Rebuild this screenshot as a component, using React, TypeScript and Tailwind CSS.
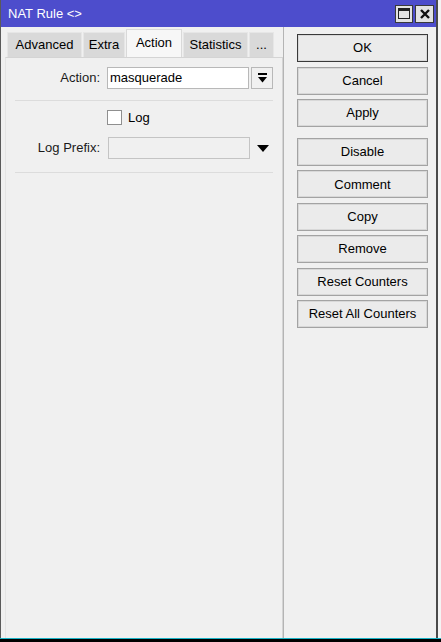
const FONT = { fontFamily: '"Liberation Sans", Arial, sans-serif' };

const TABS: { label: string; width: string; active?: boolean }[] = [
  { label: "Advanced", width: "w-[75px]" },
  { label: "Extra", width: "w-[42px]" },
  { label: "Action", width: "w-[56px]", active: true },
  { label: "Statistics", width: "w-[65px]" },
  { label: "...", width: "w-[25px]" },
];

function WinButton({ label, primary }: { label: string; primary?: boolean }) {
  return (
    <button
      className={
        "flex h-[28px] w-[131px] items-center justify-center border bg-[#ebebeb] text-[13px] text-black shadow-[inset_0_0_0_1px_#d8d8d8] " +
        (primary ? "border-[#3a3a3a]" : "border-[#a3a3a3]")
      }
    >
      {label}
    </button>
  );
}

function CollapseArrow() {
  return (
    <svg width="9" height="10" viewBox="0 0 9 10">
      <rect x="0" y="0" width="9" height="2" fill="#000" />
      <path d="M0 4 H9 L4.5 9.5 Z" fill="#000" />
    </svg>
  );
}

export default function App() {
  return (
    <div className="flex h-[642px] w-[441px] flex-col overflow-hidden bg-black" style={FONT}>
      <div className="flex h-[638px]">
        <div className="flex w-[438px] flex-col border-l border-r-2 border-l-[#5a5a5a] border-r-[#4a4a4a] bg-[#f0f0f0]">
          {/* title bar */}
          <div className="flex h-[27px] shrink-0 items-center bg-[#4d4dcc] pl-[7px] pr-[2px]">
            <span className="text-[13px] text-white">NAT Rule &lt;&gt;</span>
            <div className="ml-auto flex gap-[2px]">
              <div className="flex h-[18px] w-[18px] items-center justify-center border border-[#3a3a3a] bg-[#e3e3e3]">
                <div className="h-[11px] w-[12px] border border-t-[3px] border-[#222]" />
              </div>
              <div className="flex h-[18px] w-[19px] items-center justify-center border border-[#3a3a3a] bg-[#e3e3e3]">
                <svg width="10" height="10" viewBox="0 0 10 10">
                  <path d="M1 1 L9 9 M9 1 L1 9" stroke="#111" strokeWidth="2.4" />
                </svg>
              </div>
            </div>
          </div>

          <div className="flex flex-1">
            {/* left: tabs and panel */}
            <div className="flex w-[282px] flex-col pl-[4px] pt-[2px]">
              <div className="flex h-[28px] items-end gap-px pl-[2px]">
                {TABS.map((t) => (
                  <div
                    key={t.label}
                    className={
                      "flex items-center justify-center border border-b-0 text-[13px] text-black " +
                      t.width +
                      (t.active
                        ? " h-[28px] border-[#d9d9d9] bg-[#f7f7f7] pb-[2px]"
                        : " h-[25px] border-[#e6e6e6] bg-[#d9d9d9]")
                    }
                  >
                    {t.label}
                  </div>
                ))}
              </div>
              <div className="flex flex-1 flex-col border border-b-0 border-[#d4d4d4] border-l-[#e4e4e4] bg-[#f0f0f0]">
                <div className="mt-[9px] flex h-[22px] items-center">
                  <span className="w-[95px] pr-px text-right text-[13px] text-[#1a1a1a]">Action:</span>
                  <div className="ml-[6px] flex h-[22px] w-[142px] items-center border border-[#b8b8b8] bg-white pl-[2px] text-[13px] text-black">
                    masquerade
                  </div>
                  <div className="ml-[2px] flex h-[22px] w-[22px] items-center justify-center border border-[#b8b8b8] bg-[#f0f0f0]">
                    <CollapseArrow />
                  </div>
                </div>
                <div className="mx-[9px] mt-[11px] h-px bg-[#dcdcdc]" />
                <div className="mt-[9px] flex h-[15px] items-center pl-[101px]">
                  <div className="h-[15px] w-[15px] border border-[#8f8f8f] bg-white" />
                  <span className="ml-[6px] text-[13px] text-black">Log</span>
                </div>
                <div className="mt-[12px] flex h-[22px] items-center">
                  <span className="w-[95px] pr-px text-right text-[13px] text-[#1a1a1a]">Log Prefix:</span>
                  <div className="ml-[7px] h-[22px] w-[142px] border border-[#c4c4c4] bg-[#f0f0f0]" />
                  <svg className="ml-[7px]" width="12" height="7" viewBox="0 0 12 7">
                    <path d="M0 0 H12 L6 7 Z" fill="#000" />
                  </svg>
                </div>
                <div className="mx-[9px] mt-[13px] h-px bg-[#dcdcdc]" />
              </div>
            </div>

            {/* right: buttons */}
            <div className="flex flex-col border-l border-[#b4b4b4] pl-[13px] pt-[7px]">
              <div className="flex flex-col gap-[4.5px]">
                <WinButton label="OK" primary />
                <WinButton label="Cancel" />
                <WinButton label="Apply" />
              </div>
              <div className="mt-[11px] flex flex-col gap-[4.4px]">
                <WinButton label="Disable" />
                <WinButton label="Comment" />
                <WinButton label="Copy" />
                <WinButton label="Remove" />
                <WinButton label="Reset Counters" />
                <WinButton label="Reset All Counters" />
              </div>
            </div>
          </div>
        </div>
        <div className="w-[3px] bg-[#f4f4f4]" />
      </div>
      <div className="h-px bg-[#19b3c6]" />
      <div className="flex-1 bg-black" />
    </div>
  );
}
